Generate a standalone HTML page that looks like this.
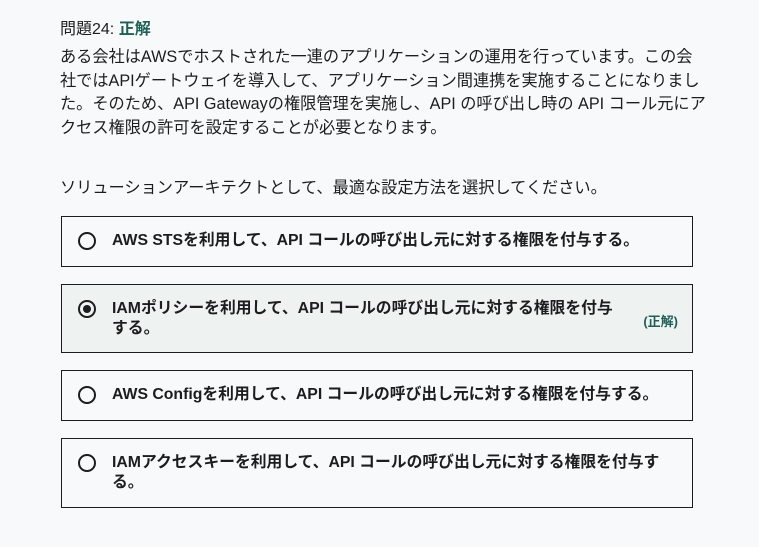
<!DOCTYPE html>
<html><head><meta charset="utf-8"><style>
body{margin:0;background:#f7f9fa;font-family:"Liberation Sans","Noto Sans CJK JP",sans-serif;color:#1c1d1f;width:759px;height:547px;overflow:hidden;position:relative}
.h{position:absolute;left:60px;top:15px;font-size:16px}
.h b{color:#1e6055}
.p{position:absolute;left:60px;top:46px;width:646px;font-size:16.2px;line-height:23.6px}
.q{position:absolute;left:60px;top:174px;font-size:16.2px}
.o{position:absolute;left:61px;width:632px;border:1px solid #1c1d1f;box-sizing:border-box;background:#f7f9fa}
.o.sel{background:#eef2f1}
.r{position:absolute;left:16px;width:18px;height:18px;border:2px solid #1c1d1f;border-radius:50%;box-sizing:border-box}
.r.on::after{content:"";position:absolute;left:3px;top:3px;width:8px;height:8px;border-radius:50%;background:#1c1d1f}
.t{position:absolute;left:50px;font-size:15.8px;font-weight:bold;line-height:19.5px;width:510px}
.c{position:absolute;right:14px;font-size:13px;font-weight:bold;color:#1e6055}
</style></head><body>
<div class="h">問題24: <b>正解</b></div>
<div class="p">ある会社はAWSでホストされた一連のアプリケーションの運用を行っています。この会社ではAPIゲートウェイを導入して、アプリケーション間連携を実施することになりました。そのため、API Gatewayの権限管理を実施し、API の呼び出し時の API コール元にアクセス権限の許可を設定することが必要となります。</div>
<div class="q">ソリューションアーキテクトとして、最適な設定方法を選択してください。</div>
<div class="o" style="top:216px;height:51px"><div class="r" style="top:15px"></div><div class="t" style="top:14px;width:570px">AWS STSを利用して、API コールの呼び出し元に対する権限を付与する。</div></div>
<div class="o sel" style="top:284px;height:69px"><div class="r on" style="top:15px"></div><div class="t" style="top:14px">IAMポリシーを利用して、API コールの呼び出し元に対する権限を付与する。</div><div class="c" style="top:26px">(正解)</div></div>
<div class="o" style="top:370px;height:51px"><div class="r" style="top:15px"></div><div class="t" style="top:14px;width:570px">AWS Configを利用して、API コールの呼び出し元に対する権限を付与する。</div></div>
<div class="o" style="top:438px;height:70px"><div class="r" style="top:15px"></div><div class="t" style="top:14px;width:555px">IAMアクセスキーを利用して、API コールの呼び出し元に対する権限を付与する。</div></div>
</body></html>
